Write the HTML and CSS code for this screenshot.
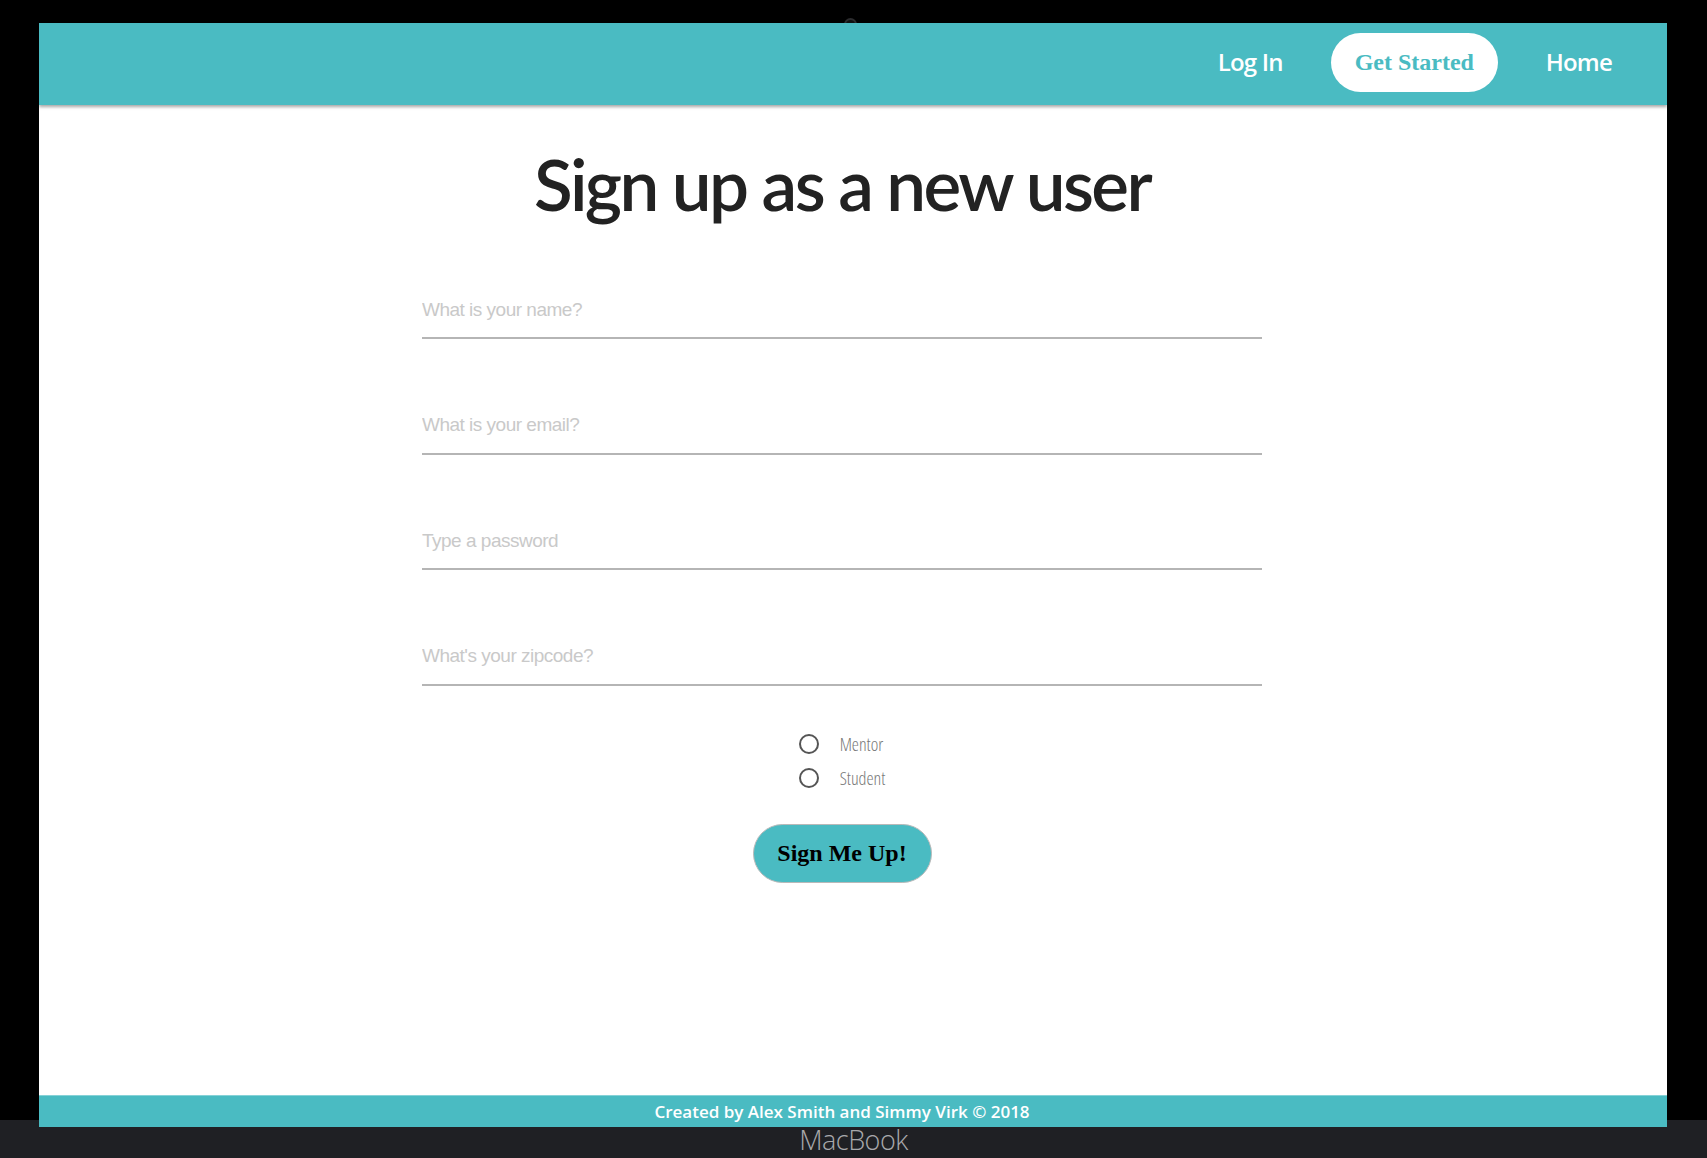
FILE: index.html
```html
<!DOCTYPE html>
<html lang="en">
<head>
<meta charset="utf-8">
<title>Sign up</title>
<link rel="stylesheet" href="styles.css">
</head>
<body>
<div class="bezel-top"><span class="camera"></span></div>
<div class="screen">
  <header class="header">
    <a class="nav-link" href="#">Log In</a>
    <a class="nav-pill" href="#">Get Started</a>
    <a class="nav-link" href="#">Home</a>
  </header>
  <main class="main">
    <h1 class="title">Sign up as a new user</h1>
    <form class="form">
      <input class="field" type="text" placeholder="What is your name?">
      <input class="field" type="email" placeholder="What is your email?">
      <input class="field" type="password" placeholder="Type a password">
      <input class="field" type="text" placeholder="What's your zipcode?">
      <div class="roles">
        <label class="role"><span class="radio"></span><span class="role-text">Mentor</span></label>
        <label class="role"><span class="radio"></span><span class="role-text">Student</span></label>
      </div>
      <button class="submit" type="button">Sign Me Up!</button>
    </form>
  </main>
  <footer class="footer">Created by Alex Smith and Simmy Virk © 2018</footer>
</div>
<div class="base">MacBook</div>
</body>
</html>
```

FILE: styles.css
```css
html, body {
  margin: 0;
  padding: 0;
}
body {
  width: 1707px;
  height: 1158px;
  overflow: hidden;
  background: linear-gradient(#000 0, #000 1120px, #1f2024 1120px, #1f2024 100%);
  font-family: "Open Sans", "Noto Sans", sans-serif;
}
.bezel-top {
  height: 23px;
  display: flex;
  justify-content: center;
  overflow: hidden;
}
.camera {
  display: block;
  width: 9px;
  height: 9px;
  margin-top: 18px;
  margin-left: -6px;
  border-radius: 50%;
  border: 2px solid #2c2c2e;
  background: #111;
}
.screen {
  margin: 0 40px 0 39px;
  height: 1104px;
  background: #fff;
  display: flex;
  flex-direction: column;
}
.header {
  height: 82px;
  flex: none;
  background: #4abbc2;
  box-shadow: 0 2px 3px rgba(0,0,0,0.35);
  display: flex;
  justify-content: flex-end;
  align-items: center;
  gap: 48px;
  padding-right: 55px;
  position: relative;
  z-index: 1;
}
.nav-link {
  color: #fff;
  text-decoration: none;
  font-family: "Open Sans", sans-serif;
  font-weight: 600;
  font-size: 24px;
  letter-spacing: -0.8px;
  margin-top: -5px;
}
.nav-pill {
  width: 167px;
  height: 59px;
  box-sizing: border-box;
  border-radius: 30px;
  background: #fff;
  color: #4abbc2;
  text-decoration: none;
  font-family: "Liberation Serif", serif;
  font-weight: bold;
  font-size: 24px;
  display: flex;
  align-items: center;
  justify-content: center;
  margin-top: -3px;
}
.main {
  flex: 1;
  display: flex;
  flex-direction: column;
  align-items: center;
  padding-right: 22px;
}
.title {
  margin: 34px 0 0;
  font-family: Lato, "Open Sans", sans-serif;
  font-weight: 600;
  font-size: 71px;
  line-height: 90px;
  color: #222;
  letter-spacing: -2.6px;
}
.form {
  width: 840px;
  display: flex;
  flex-direction: column;
  align-items: center;
  margin-top: 50px;
}
.field {
  width: 100%;
  height: 60px;
  box-sizing: border-box;
  border: none;
  border-bottom: 2px solid #b5b5b5;
  outline: none;
  padding: 3px 0 0;
  margin: 0 0 55.5px;
  font-family: "Liberation Sans", Arial, sans-serif;
  font-size: 19px;
  letter-spacing: -0.5px;
  color: #333;
  background: transparent;
}
.field::placeholder {
  color: #c9c9c9;
}
.roles {
  display: flex;
  flex-direction: column;
  gap: 14px;
  margin-top: -7px;
}
.role {
  display: flex;
  align-items: center;
  gap: 21px;
  height: 20px;
}
.radio {
  width: 16px;
  height: 16px;
  border: 2px solid #555;
  border-radius: 50%;
}
.role-text {
  font-family: "Open Sans", sans-serif;
  font-stretch: 75%;
  font-weight: 300;
  font-size: 18px;
  color: #777;
}
.submit {
  margin-top: 36px;
  width: 179px;
  height: 59px;
  border: 1px solid #b9b9b9;
  border-radius: 30px;
  background: #4abbc2;
  color: #000;
  font-family: "Liberation Serif", serif;
  font-weight: bold;
  font-size: 24px;
  padding: 0;
}
.footer {
  height: 32px;
  flex: none;
  box-sizing: border-box;
  background: #4abbc2;
  border-top: 1px solid #86d2d7;
  color: #fff;
  font-family: "Open Sans", sans-serif;
  font-weight: 600;
  font-size: 17px;
  letter-spacing: 0;
  display: flex;
  align-items: center;
  justify-content: center;
  padding-right: 22px;
}
.base {
  height: 31px;
  text-align: center;
  color: #a8a8ab;
  font-family: "Open Sans", sans-serif;
  font-weight: 300;
  font-size: 27px;
  line-height: 25px;
  letter-spacing: -0.5px;
}
```
